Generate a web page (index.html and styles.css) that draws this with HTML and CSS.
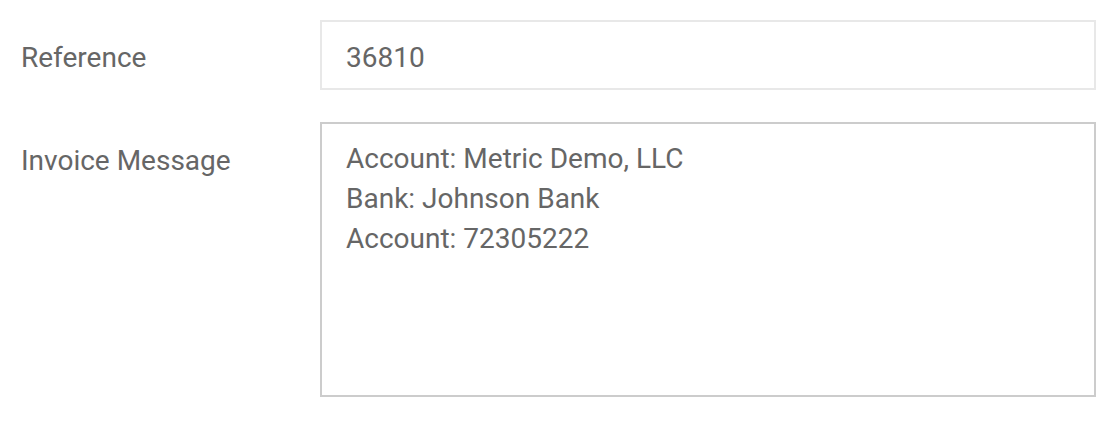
FILE: index.html
```html
<!DOCTYPE html>
<html>
<head>
<meta charset="utf-8">
<link rel="stylesheet" href="styles.css">
</head>
<body>
<form class="form">
  <label class="label" for="ref">Reference</label>
  <input class="field input" id="ref" type="text" value="36810">
  <label class="label label-msg" for="msg">Invoice Message</label>
  <textarea class="field textarea" id="msg">Account: Metric Demo, LLC
Bank: Johnson Bank
Account: 72305222</textarea>
</form>
</body>
</html>
```
FILE: styles.css
```css
html, body {
  margin: 0;
  padding: 0;
  background: #ffffff;
}
.form {
  display: grid;
  grid-template-columns: 300px 1fr;
  row-gap: 32px;
  padding: 20px 22px 0 20px;
  font-family: Roboto, "Noto Sans", sans-serif;
  font-size: 28px;
  color: #666666;
}
.label {
  padding-left: 1px;
  padding-top: 5px;
  align-self: start;
  line-height: 65px;
}
.label-msg {
  padding-top: 0;
  line-height: 78px;
}
.field {
  box-sizing: border-box;
  width: 100%;
  margin: 0;
  font: inherit;
  color: #666666;
  background: #ffffff;
  outline: none;
}
.input {
  height: 70px;
  border: 2px solid #e8e8e8;
  padding: 5px 24px 0;
}
.textarea {
  height: 275px;
  border: 2px solid #cccccc;
  padding: 15px 24px;
  line-height: 40px;
  resize: none;
}
```
